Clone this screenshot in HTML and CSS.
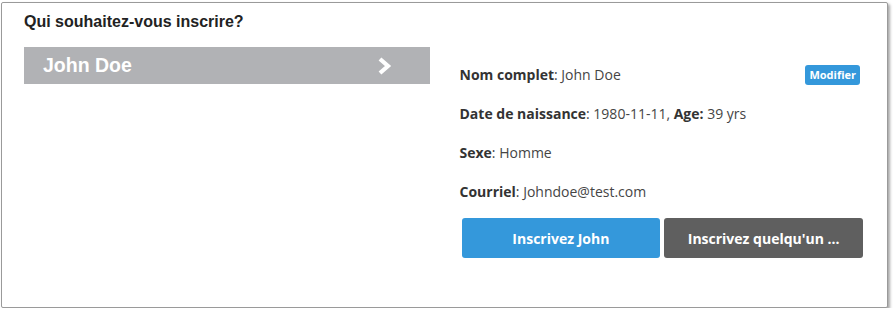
FILE: index.html
```html
<!DOCTYPE html>
<html lang="fr">
<head>
<meta charset="UTF-8">
<meta name="viewport" content="width=device-width, initial-scale=1.0">
<title>Inscription</title>
<link rel="stylesheet" href="styles.css">
</head>
<body>
    <div class="panel">
        <h2 class="panel-title">Qui souhaitez-vous inscrire?</h2>

        <div class="panel-body">
            <div class="people">
                <div class="person active">
                    <span>John Doe</span>
                    <svg class="chevron" width="16" height="20" viewBox="0 0 16 20">
                        <polyline points="3,3 11,10 3,17" fill="none" stroke="#fff" stroke-width="4.2" stroke-linejoin="miter"/>
                    </svg>
                </div>
            </div>

            <div class="details">
                <div class="row">
                    <span><b>Nom complet</b>: John Doe</span>
                    <button type="button" class="badge">Modifier</button>
                </div>
                <div class="row"><span><b>Date de naissance</b>: 1980-11-11, <b>Age:</b> 39 yrs</span></div>
                <div class="row"><span><b>Sexe</b>: Homme</span></div>
                <div class="row"><span><b>Courriel</b>: Johndoe@test.com</span></div>

                <div class="actions">
                    <button type="button" class="btn btn-blue">Inscrivez John</button>
                    <button type="button" class="btn btn-dark">Inscrivez quelqu'un ...</button>
                </div>
            </div>
        </div>
    </div>
</body>
</html>
```

FILE: styles.css
```css
body {
    margin: 0;
    background-color: #fff;
    font-family: "Liberation Sans", Arial, sans-serif;
}

.panel {
    box-sizing: border-box;
    width: 887px;
    height: 306px;
    margin: 2px 0 0 1px;
    padding: 9px 22px 0 22px;
    border: 1px solid #9a9a9a;
    border-radius: 2px;
    background-color: #fff;
    box-shadow: 2px 2px 3px rgba(0, 0, 0, 0.35);
}

.panel-title {
    margin: 0;
    font-size: 16px;
    line-height: 20px;
    font-weight: bold;
    color: #222;
}

.panel-body {
    display: flex;
    gap: 30px;
    margin-top: 15px;
}

.people {
    width: 406px;
}

.person {
    display: flex;
    align-items: center;
    justify-content: space-between;
    height: 37px;
    padding: 0 37px 0 19px;
    background-color: #b1b2b5;
    color: #fff;
    font-size: 19.5px;
    font-weight: bold;
}

.chevron {
    display: block;
}

.details {
    width: 406px;
    padding-top: 8px;
    font-family: "Open Sans", sans-serif;
    font-size: 14px;
    color: #454545;
}

.row {
    display: flex;
    align-items: center;
    justify-content: space-between;
    height: 39px;
    padding-right: 5px;
}

.row b {
    font-weight: bold;
    color: #333;
}

.badge {
    height: 20px;
    padding: 0 4px;
    border: none;
    border-radius: 3px;
    background-color: #3498db;
    color: #fff;
    font-family: "Open Sans", sans-serif;
    font-size: 11px;
    font-weight: bold;
}

.actions {
    display: flex;
    gap: 4px;
    margin: 7px 2px 0 2px;
}

.btn {
    flex: 1;
    height: 40px;
    border: none;
    border-radius: 3px;
    color: #fff;
    font-family: "Open Sans", sans-serif;
    font-size: 14px;
    font-weight: bold;
}

.btn-blue {
    background-color: #3498db;
}

.btn-dark {
    background-color: #5f5f5f;
}
```
